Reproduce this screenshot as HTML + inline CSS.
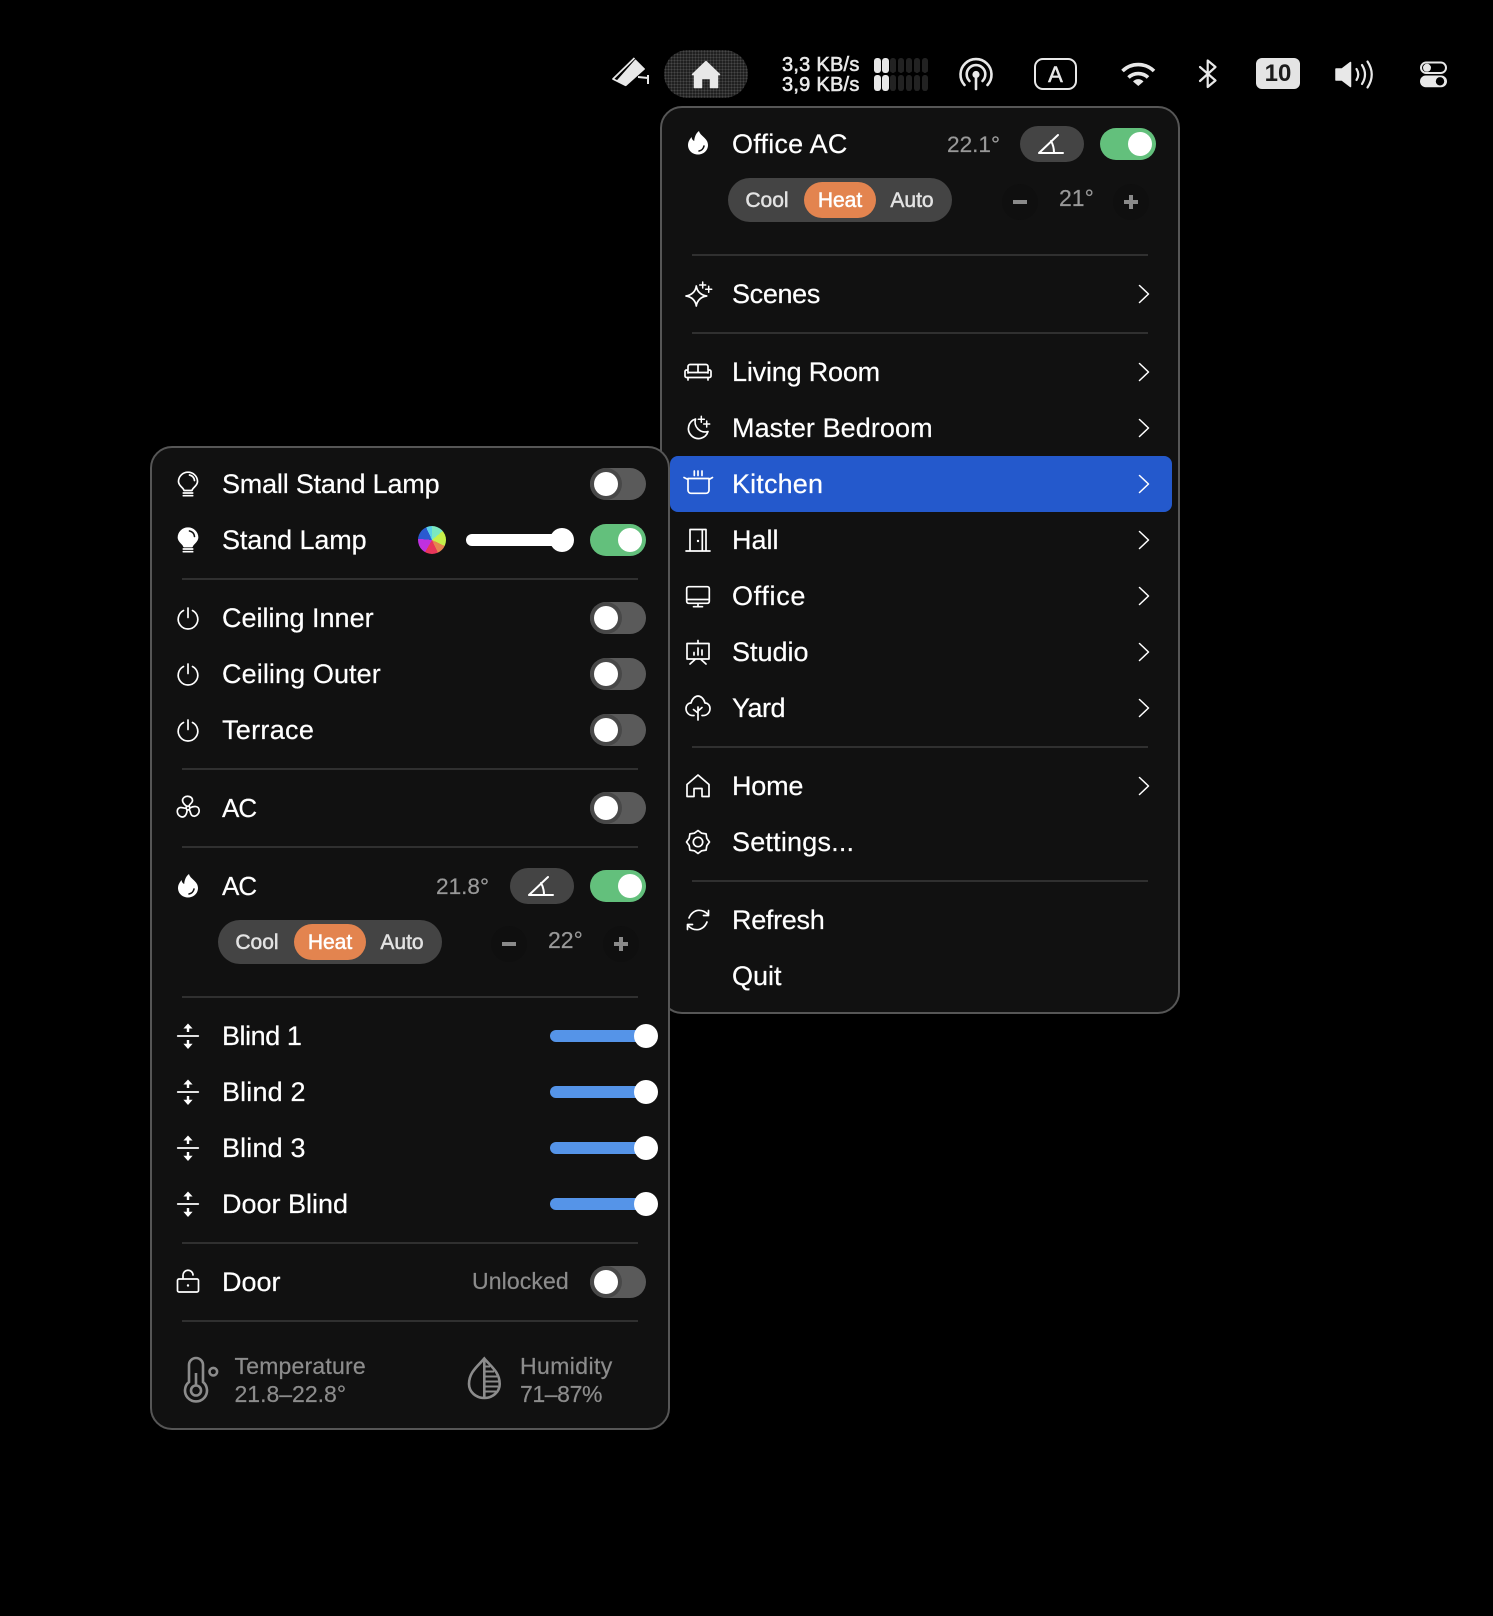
<!DOCTYPE html>
<html><head><meta charset="utf-8"><title>Menu</title>
<style>
html,body{margin:0;padding:0;background:#000;width:1493px;height:1616px;overflow:hidden}
body{position:relative;font-family:"Liberation Sans",sans-serif}
.p{position:absolute;box-sizing:border-box;background:#111;border:2px solid #565656;border-radius:22px}
.t{position:absolute;font-size:27px;line-height:32px;height:32px;color:#fff;white-space:nowrap;-webkit-text-stroke:.2px #fff}
.g{position:absolute;font-size:23px;line-height:28px;height:28px;color:#8c8c8c;white-space:nowrap;-webkit-text-stroke:.2px currentColor}
.s{position:absolute;height:2px;background:#303030}
.tg{position:absolute;width:56px;height:32px;border-radius:16px;background:#5a5a5a}
.tg:before{content:"";position:absolute;top:4px;left:4px;width:24px;height:24px;border-radius:50%;background:#fff;box-shadow:0 0 0 4px #484848}
.tg.on{background:#63c07c}
.tg.on:before{left:28px;box-shadow:none}
.seg{position:absolute;width:224px;height:44px;border-radius:22px;background:#444}
.seg i{position:absolute;left:76px;top:4px;width:72px;height:36px;border-radius:18px;background:#e3844f}
.seg b{position:absolute;top:7px;width:72px;text-align:center;font-weight:400;font-size:21px;line-height:32px;color:#e2e2e2;-webkit-text-stroke:.5px currentColor}
.btn{position:absolute;width:64px;height:36px;border-radius:18px;background:#444}
.tr{position:absolute;width:96px;height:12px;border-radius:6px;background:#5594e8}
.kn{position:absolute;width:24px;height:24px;border-radius:50%;background:#fff}
.st{position:absolute;width:36px;height:36px;border-radius:18px;background:#0f0f0f}
.bar{position:absolute;width:6px;height:15.5px;border-radius:3px;background:radial-gradient(circle,#4e4e4e 40%,#141414 48%) 0 0/2px 2px}
.bar.w{background:#e8e8e8;width:6.5px}
.nt{position:absolute;left:782px;font-size:20px;line-height:22px;color:#e8e8e8;-webkit-text-stroke:.6px #e8e8e8;white-space:nowrap;letter-spacing:.25px}
svg.o{position:absolute;left:0;top:0;z-index:5}
.k{fill:none;stroke:#fff;stroke-width:1.7;stroke-linecap:round;stroke-linejoin:round}
.c{stroke-width:1.5}
.a{stroke-width:2}
</style></head><body>

<!-- Menu bar pill -->
<div style="position:absolute;left:664px;top:50px;width:84px;height:48px;border-radius:24px;background:radial-gradient(circle,#474747 42%,#202020 50%) 0 0/3px 3px"></div>

<div class="nt" style="top:54px">3,3 KB/s</div>
<div class="nt" style="top:74px">3,9 KB/s</div>

<div class="bar w" style="left:874px;top:57.7px"></div><div class="bar w" style="left:882px;top:57.7px"></div><div class="bar" style="left:890px;top:57.7px"></div><div class="bar" style="left:898px;top:57.7px"></div><div class="bar" style="left:906px;top:57.7px"></div><div class="bar" style="left:914px;top:57.7px"></div><div class="bar" style="left:922px;top:57.7px"></div>
<div class="bar w" style="left:874px;top:75px"></div><div class="bar w" style="left:882px;top:75px"></div><div class="bar" style="left:890px;top:75px"></div><div class="bar" style="left:898px;top:75px"></div><div class="bar" style="left:906px;top:75px"></div><div class="bar" style="left:914px;top:75px"></div><div class="bar" style="left:922px;top:75px"></div>

<div style="position:absolute;left:1034px;top:58px;width:39px;height:28px;border:2px solid #e8e8e8;border-radius:9px;color:#e8e8e8;font-size:22px;line-height:29px;text-align:center;-webkit-text-stroke:.5px #e8e8e8">A</div>
<div style="position:absolute;left:1256px;top:58px;width:44px;height:31px;border-radius:6px;background:#e4e4e4;color:#1c1c1c;font-size:24px;font-weight:700;line-height:32px;text-align:center">10</div>

<!-- Right panel -->
<div class="p" style="left:660px;top:106px;width:520px;height:908px"></div>
<div style="position:absolute;left:670px;top:456px;width:502px;height:56px;border-radius:8px;background:#2459cc"></div>

<div class="t" style="left:732px;top:128px;letter-spacing:.23px">Office AC</div>
<div class="g" style="left:947px;top:131px;color:#999;font-size:22.6px">22.1°</div>
<div class="btn" style="left:1020px;top:126px"></div>
<div class="tg on" style="left:1100px;top:128px"></div>
<div class="seg" style="left:728px;top:178px"><i></i><b style="left:3px">Cool</b><b style="left:76px;color:#fff">Heat</b><b style="left:148px">Auto</b></div>
<div class="st" style="left:1002px;top:184px"></div><div class="st" style="left:1113px;top:184px"></div>
<div class="g" style="left:1059px;top:184px;color:#999">21°</div>
<div style="position:absolute;left:1013px;top:200px;width:14px;height:4px;background:#8a8a8a"></div>
<div style="position:absolute;left:1124px;top:200px;width:14px;height:4px;background:#8a8a8a"></div>
<div style="position:absolute;left:1129px;top:195px;width:4px;height:14px;background:#8a8a8a"></div>

<div class="s" style="left:692px;top:254px;width:456px"></div>
<div class="t" style="left:732px;top:278px;letter-spacing:-.34px">Scenes</div>
<div class="s" style="left:692px;top:332px;width:456px"></div>
<div class="t" style="left:732px;top:356px;letter-spacing:-.19px">Living Room</div>
<div class="t" style="left:732px;top:412px;letter-spacing:.08px">Master Bedroom</div>
<div class="t" style="left:732px;top:468px;letter-spacing:.15px">Kitchen</div>
<div class="t" style="left:732px;top:524px">Hall</div>
<div class="t" style="left:732px;top:580px;letter-spacing:.68px">Office</div>
<div class="t" style="left:732px;top:636px">Studio</div>
<div class="t" style="left:732px;top:692px;letter-spacing:-.5px">Yard</div>
<div class="s" style="left:692px;top:746px;width:456px"></div>
<div class="t" style="left:732px;top:770px;letter-spacing:-.2px">Home</div>
<div class="t" style="left:732px;top:826px;letter-spacing:.2px">Settings...</div>
<div class="s" style="left:692px;top:880px;width:456px"></div>
<div class="t" style="left:732px;top:904px;letter-spacing:-.3px">Refresh</div>
<div class="t" style="left:732px;top:960px">Quit</div>

<!-- Left panel -->
<div class="p" style="left:150px;top:446px;width:520px;height:984px"></div>

<div class="t" style="left:222px;top:468px;letter-spacing:-.2px">Small Stand Lamp</div>
<div class="tg" style="left:590px;top:468px"></div>
<div class="t" style="left:222px;top:524px;letter-spacing:-.1px">Stand Lamp</div>
<div style="position:absolute;left:418px;top:526px;width:28px;height:28px;border-radius:50%;background:conic-gradient(#7be8c0 0 50deg,#c5f04a 50deg 115deg,#e6844f 115deg 155deg,#e8365a 155deg 210deg,#c030e0 210deg 275deg,#2a5ad0 275deg 335deg,#5ad0e8 335deg 360deg)"></div>
<div style="position:absolute;left:466px;top:534px;width:100px;height:12px;border-radius:6px;background:#fff"></div>
<div class="kn" style="left:550px;top:528px"></div>
<div class="tg on" style="left:590px;top:524px"></div>
<div class="s" style="left:182px;top:578px;width:456px"></div>
<div class="t" style="left:222px;top:602px">Ceiling Inner</div>
<div class="tg" style="left:590px;top:602px"></div>
<div class="t" style="left:222px;top:658px;letter-spacing:.1px">Ceiling Outer</div>
<div class="tg" style="left:590px;top:658px"></div>
<div class="t" style="left:222px;top:714px;letter-spacing:.3px">Terrace</div>
<div class="tg" style="left:590px;top:714px"></div>
<div class="s" style="left:182px;top:768px;width:456px"></div>
<div class="t" style="left:222px;top:792px;font-size:26px;letter-spacing:-1px">AC</div>
<div class="tg" style="left:590px;top:792px"></div>
<div class="s" style="left:182px;top:846px;width:456px"></div>
<div class="t" style="left:222px;top:870px;font-size:26px;letter-spacing:-1px">AC</div>
<div class="g" style="left:436px;top:873px;color:#999;font-size:22.6px">21.8°</div>
<div class="btn" style="left:510px;top:868px"></div>
<div class="tg on" style="left:590px;top:870px"></div>
<div class="seg" style="left:218px;top:920px"><i></i><b style="left:3px">Cool</b><b style="left:76px;color:#fff">Heat</b><b style="left:148px">Auto</b></div>
<div class="st" style="left:491px;top:926px"></div><div class="st" style="left:603px;top:926px"></div>
<div class="g" style="left:548px;top:926px;color:#999">22°</div>
<div style="position:absolute;left:502px;top:942px;width:14px;height:4px;background:#8a8a8a"></div>
<div style="position:absolute;left:614px;top:942px;width:14px;height:4px;background:#8a8a8a"></div>
<div style="position:absolute;left:619px;top:937px;width:4px;height:14px;background:#8a8a8a"></div>
<div class="s" style="left:182px;top:996px;width:456px"></div>
<div class="t" style="left:222px;top:1020px;letter-spacing:-.45px">Blind 1</div>
<div class="tr" style="left:550px;top:1030px"></div><div class="kn" style="left:634px;top:1024px"></div>
<div class="t" style="left:222px;top:1076px;letter-spacing:.15px">Blind 2</div>
<div class="tr" style="left:550px;top:1086px"></div><div class="kn" style="left:634px;top:1080px"></div>
<div class="t" style="left:222px;top:1132px;letter-spacing:.15px">Blind 3</div>
<div class="tr" style="left:550px;top:1142px"></div><div class="kn" style="left:634px;top:1136px"></div>
<div class="t" style="left:222px;top:1188px">Door Blind</div>
<div class="tr" style="left:550px;top:1198px"></div><div class="kn" style="left:634px;top:1192px"></div>
<div class="s" style="left:182px;top:1242px;width:456px"></div>
<div class="t" style="left:222px;top:1266px">Door</div>
<div class="g" style="left:472px;top:1267px;letter-spacing:.12px">Unlocked</div>
<div class="tg" style="left:590px;top:1266px"></div>
<div class="s" style="left:182px;top:1320px;width:456px"></div>
<div class="g" style="left:234.5px;top:1352px;letter-spacing:.2px">Temperature</div>
<div class="g" style="left:234.5px;top:1380px">21.8–22.8°</div>
<div class="g" style="left:520px;top:1352px;letter-spacing:.4px">Humidity</div>
<div class="g" style="left:520px;top:1380px;letter-spacing:-.4px">71–87%</div>

<svg class="o" width="1493" height="1616" viewBox="0 0 1493 1616" xmlns="http://www.w3.org/2000/svg">
<defs>
<g id="chev"><path class="k c" d="M-4.5 -8.5L4.5 0L-4.5 8.5"/></g>
<g id="flame"><path fill="#fff" d="M1 -12C2 -7 10 -5 10 2C10 8 5 11.5 0 11.5C-5 11.5 -10 8 -10 2C-10 -2 -7.5 -4.5 -6.5 -6C-6 -3.5 -5 -2.5 -3.8 -2C-3.5 -6 -2 -10 1 -12Z"/><path d="M1 8C3.5 7.5 5.5 5.5 6 3" fill="none" stroke="#111" stroke-width="1.6" stroke-linecap="round"/></g>
<g id="angle"><path class="k a" d="M-13 9H11M-13 9L6 -9M-1 -3Q2 2 2 9"/></g>
<g id="power"><path class="k" d="M-4.5 -7.5A9.8 9.8 0 1 0 4.5 -7.5M0 -10V-0.5"/></g>
<g id="bulb"><path class="k" d="M-4 6.5C-4.5 3.5 -9.5 2 -9.5 -2.5A9.5 9.3 0 0 1 9.5 -2.5C9.5 2 4.5 3.5 4 6.5ZM-4.7 9H4.7M-4.7 11.7H4.7M1.5 -9Q6 -8 6.5 -3.5"/></g>
<g id="bulbf"><path fill="#fff" stroke="#fff" stroke-width="1.7" stroke-linejoin="round" d="M-4 6.5C-4.5 3.5 -9.5 2 -9.5 -2.5A9.5 9.3 0 0 1 9.5 -2.5C9.5 2 4.5 3.5 4 6.5Z"/><path class="k" d="M-4.7 9H4.7M-4.7 11.7H4.7"/><path d="M1.5 -9Q6 -8 6.5 -3.5" fill="none" stroke="#111" stroke-width="1.6" stroke-linecap="round"/></g>
<g id="blind"><path class="k" d="M-10.3 0H10.3"/><path fill="none" stroke="#fff" stroke-width="2.4" d="M0 -8V-4M0 8V4"/><path fill="#fff" d="M-4.6 -7.5L0 -12.5L4.6 -7.5ZM-4.6 7.7L0 13L4.6 7.7Z"/></g>
<g id="plus"><path class="k" style="stroke-width:1.5" d="M0 -3V3M-3 0H3"/></g>
<path id="blade" class="k" d="M-1 -1.6C-5 -4 -7 -8 -4 -10.5C-1 -13 4 -11.5 4.5 -8C5 -5 1 -4 1 -1.6"/>
</defs>

<!-- menu bar icons -->
<path fill="#e8e8e8" stroke="#e8e8e8" stroke-width="1" stroke-linejoin="round" d="M635.5 60L644.5 69L626 85.5L617 81Z"/>
<path fill="none" stroke="#e8e8e8" stroke-width="1.8" stroke-linejoin="round" d="M634.5 58L613 79L626 85.5"/>
<path fill="none" stroke="#e8e8e8" stroke-width="2" d="M638 77L648 78M648 75V84"/>
<path fill="#e8e8e8" stroke="#e8e8e8" stroke-width="1.5" stroke-linejoin="round" d="M706 61.5L692.5 74.5H694.5V87.5H701.5V78.5H710.5V87.5H717.5V74.5H719.5Z"/>
<g fill="none" stroke="#e8e8e8" stroke-width="2.6" stroke-linecap="round"><path d="M964.5 85A15.5 15.5 0 1 1 987.5 85"/><path d="M969.5 81A9.3 9.3 0 1 1 982.5 81"/><path d="M976 76V89"/></g>
<circle cx="976" cy="74.5" r="3.6" fill="#e8e8e8"/>
<g fill="none" stroke="#e8e8e8" stroke-width="3.6"><path d="M1122.5 71A22.5 22.5 0 0 1 1154 71"/><path d="M1128.5 77.5A14 14 0 0 1 1148 77.5"/></g>
<path fill="#e8e8e8" d="M1133 81.5A7 7 0 0 1 1143.5 81.5L1138.3 86Z"/>
<path fill="none" stroke="#e8e8e8" stroke-width="2.2" stroke-linejoin="round" stroke-linecap="round" d="M1200 67L1215.5 80.5L1207.7 87V60.5L1215.5 67L1200 81"/>
<path fill="#e8e8e8" stroke="#e8e8e8" stroke-width="1.5" stroke-linejoin="round" d="M1336 69H1342L1350.5 62.5V86.5L1342 80H1336Z"/>
<g fill="none" stroke="#e8e8e8" stroke-width="2.2" stroke-linecap="round"><path d="M1356.5 69Q1360 74.5 1356.5 80"/><path d="M1362 65Q1368 74.5 1362 84"/><path d="M1367.5 61.5Q1376 74.5 1367.5 87.5"/></g>
<rect x="1421" y="62.5" width="25" height="10.5" rx="5.2" fill="none" stroke="#e8e8e8" stroke-width="2"/>
<circle cx="1427" cy="67.8" r="4" fill="#e8e8e8"/>
<rect x="1420" y="75.5" width="27" height="11.7" rx="5.8" fill="#e8e8e8"/>
<circle cx="1440" cy="81.3" r="4.2" fill="#000"/>

<!-- right menu icons -->
<use href="#flame" x="698" y="143"/>
<use href="#angle" x="1052" y="144"/>
<g transform="translate(698 294)"><path class="k" d="M-1.7 -8C-1 -2.5 3 1.2 8.7 2C3 2.8 -1 6.5 -1.7 12C-2.4 6.5 -6.4 2.8 -12 2C-6.4 1.2 -2.4 -2.5 -1.7 -8Z"/><use href="#plus" x="4.7" y="-9"/><use href="#plus" x="10.7" y="-4.7" /></g>
<g transform="translate(698 372)"><path class="k" d="M-10 -2V-5.5A2 2 0 0 1 -8 -7.5H8A2 2 0 0 1 10 -5.5V-2M0 -7.5V.5M-10 .5H10M-10 1V-.5A1.5 1.5 0 0 0 -13 -.5V4A1.5 1.5 0 0 0 -11.5 5.5H11.5A1.5 1.5 0 0 0 13 4V-.5A1.5 1.5 0 0 0 10 -.5V1M-10 5.5V8M10 5.5V8"/></g>
<g transform="translate(698 428)"><path class="k" d="M-2.5 -9A10 10 0 1 0 10 3.5A10 10 0 0 1 -2.5 -9Z"/><use href="#plus" x="3.3" y="-8.7"/><use href="#plus" x="8.7" y="-4"/></g>
<g transform="translate(698 484)"><path class="k" d="M-10 -5.5H11V6.3A3 3 0 0 1 8 9.3H-7A3 3 0 0 1 -10 6.3ZM-10 -4.5L-14 -6.5M11 -4.5L14.5 -6.5M-3.7 -13V-8.5M0 -13V-8.5M4 -13V-8.5"/></g>
<g transform="translate(698 540)"><path class="k" d="M-8 11V-10.5H8V11M-12 11H12M4.3 -10V11"/><circle cx="0" cy="1" r="1.2" fill="#fff"/></g>
<g transform="translate(698 596)"><path class="k" d="M-9.3 -9.3H9.3A2 2 0 0 1 11.3 -7.3V5.3A2 2 0 0 1 9.3 7.3H-9.3A2 2 0 0 1 -11.3 5.3V-7.3A2 2 0 0 1 -9.3 -9.3ZM-11.3 3.5H11.3M0 7.5V10.7M-4.5 10.7H4.5"/></g>
<g transform="translate(698 652)"><path class="k" d="M-11 -8.5H11V7H-11ZM0 -11.5V-8.5M-3 7.5L-8 12M3 7.5L8 12"/><path class="k" d="M-4 3V0.5M0 3V-4M4 3V-2"/></g>
<g transform="translate(698 708)"><path class="k" d="M-4 7.5C-9 8 -12 4.5 -12 .5C-12 -3 -9.5 -5 -7 -5C-6 -9 -3 -12 0 -12C3 -12 6 -9 7 -5C9.5 -5 12 -3 12 .5C12 4.5 9 8 4 7.5M0 -1V12M0 5L-4.5 1.5M0 3L4 -.5"/></g>
<g transform="translate(698 786)"><path class="k" d="M-11 10.5V-1.5L0 -11L11 -1.5V10.5H4V2.5H-4V10.5Z"/></g>
<g transform="translate(698 842)"><path class="k" d="M11.5 0L8.8 3.6L8.1 8.1L3.6 8.8L0 11.5L-3.6 8.8L-8.1 8.1L-8.8 3.6L-11.5 0L-8.8 -3.6L-8.1 -8.1L-3.6 -8.8L0 -11.5L3.6 -8.8L8.1 -8.1L8.8 -3.6Z"/><circle cx="0" cy="0" r="4.7" class="k"/></g>
<g transform="translate(698 919)"><path class="k" d="M-9 -1C-7 -6 -3 -8.7 1 -8.7C5 -8.7 8 -7 10.5 -4M10.5 -8.5V-3.5H5.5M9 3C7 8 3 10.7 -1 10.7C-5 10.7 -8 9 -10.5 6M-10.5 10.5V5.5H-5.5"/></g>
<use href="#chev" x="1144" y="294"/><use href="#chev" x="1144" y="372"/><use href="#chev" x="1144" y="428"/><use href="#chev" x="1144" y="484"/><use href="#chev" x="1144" y="540"/><use href="#chev" x="1144" y="596"/><use href="#chev" x="1144" y="652"/><use href="#chev" x="1144" y="708"/><use href="#chev" x="1144" y="786"/>

<!-- left panel icons -->
<use href="#bulb" x="188" y="484"/>
<use href="#bulbf" x="188" y="540"/>
<use href="#power" x="188" y="618"/>
<use href="#power" x="188" y="674"/>
<use href="#power" x="188" y="730"/>
<g transform="translate(188 808)"><use href="#blade"/><use href="#blade" transform="rotate(120)"/><use href="#blade" transform="rotate(240)"/><circle r="1.9" class="k"/></g>
<use href="#flame" x="188" y="886"/>
<use href="#angle" x="542" y="886"/>
<use href="#blind" x="188" y="1036"/>
<use href="#blind" x="188" y="1092"/>
<use href="#blind" x="188" y="1148"/>
<use href="#blind" x="188" y="1204"/>
<g transform="translate(188 1282)"><path class="k" d="M-9 -3H9A1.5 1.5 0 0 1 10.5 -1.5V8.5A1.5 1.5 0 0 1 9 10H-9A1.5 1.5 0 0 1 -10.5 8.5V-1.5A1.5 1.5 0 0 1 -9 -3ZM-5 -3V-6.5A5 5 0 0 1 5 -7"/><circle cx="0" cy="3.5" r="1.2" fill="#fff"/></g>
<g fill="none" stroke="#8c8c8c" stroke-width="2.6"><path d="M189 1382V1365A7 7 0 0 1 203 1365V1382A11 11 0 1 1 189 1382Z"/><circle cx="196" cy="1390.5" r="5"/><path d="M196 1373V1386"/><circle cx="213.3" cy="1371.7" r="3.8"/></g>
<g fill="none" stroke="#8c8c8c" stroke-width="2.6"><path d="M484.3 1358.5C478 1366 469 1372 469 1384C469 1392 476 1398 484.3 1398C492.5 1398 499.7 1392 499.7 1384C499.7 1372 490.5 1366 484.3 1358.5Z"/><path d="M484.3 1359V1398"/><path stroke-width="2" d="M484 1366.5H490M484 1371.5H494M484 1376.5H497M484 1381.5H499M484 1386.5H498M484 1391.5H496"/></g>
</svg>
</body></html>
